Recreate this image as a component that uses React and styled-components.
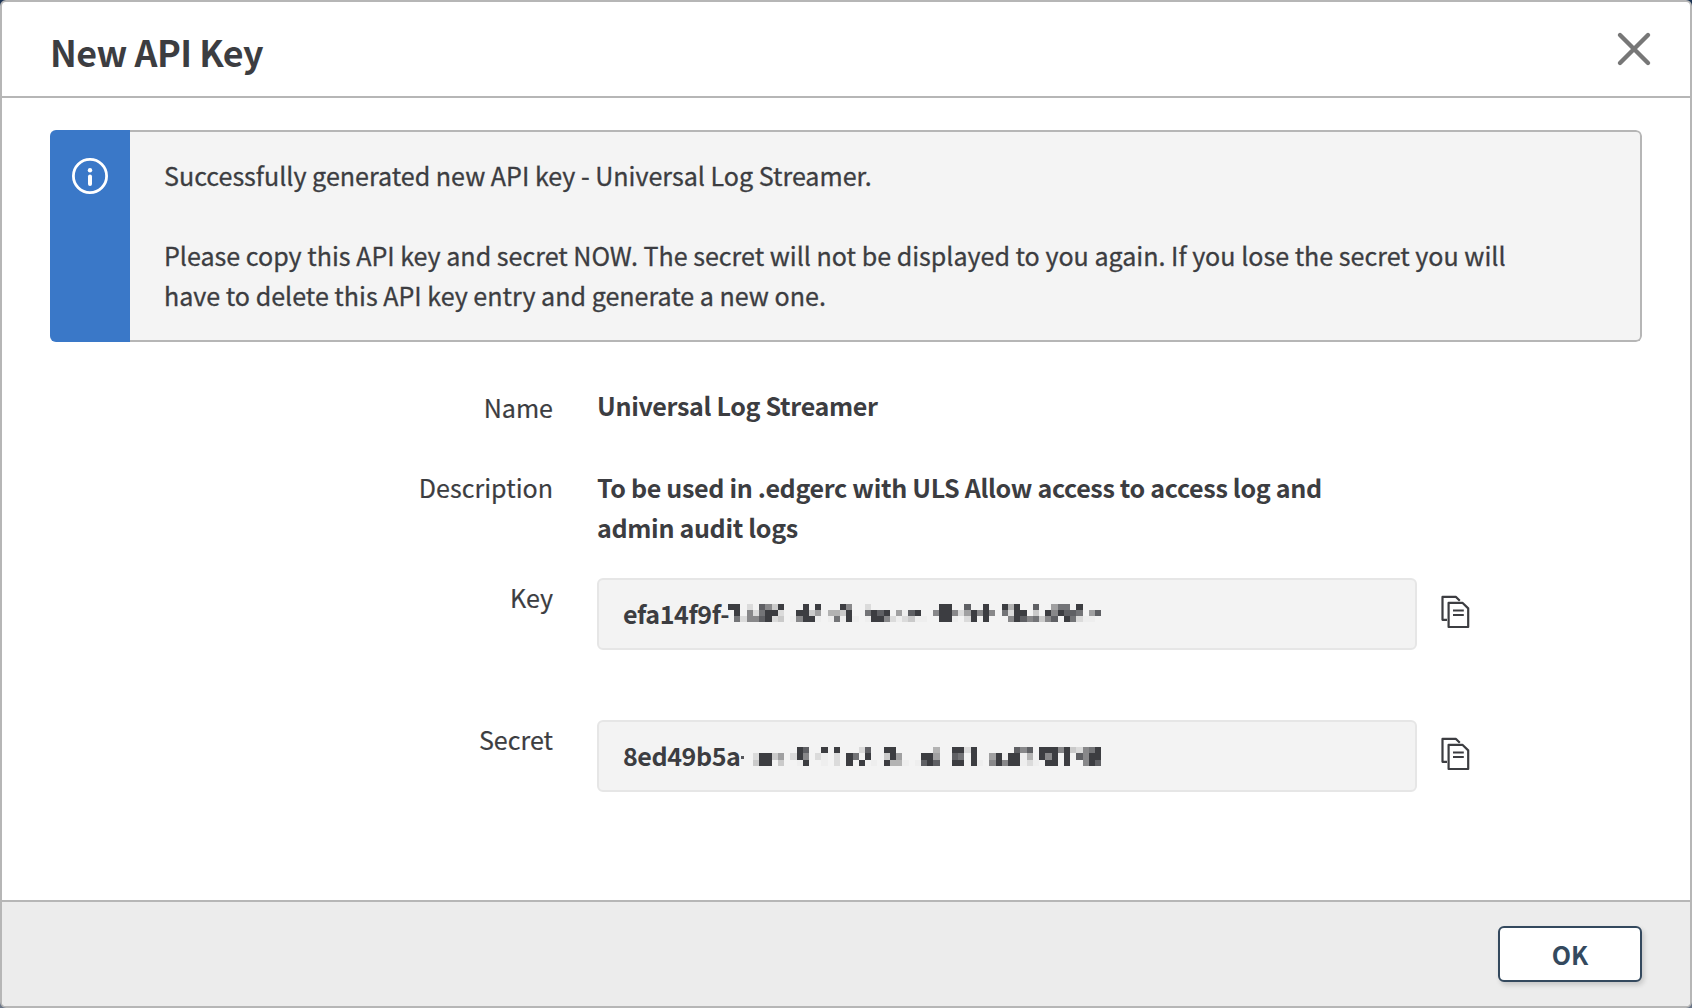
import React from "react";
import styled, { createGlobalStyle } from "styled-components";

const INK = "#3c3d41";
const LINE = "#b6b6b6";

const GlobalStyle = createGlobalStyle`
  * { box-sizing: border-box; }
  html, body { margin: 0; padding: 0; }
  body {
    background: linear-gradient(#1c3454 50%, #6a7587 50%);
    font-family: "Noto Sans CJK SC", "Noto Sans CJK JP", "Noto Sans", sans-serif;
    font-size: 25.07px;
    line-height: 40px;
    color: ${INK};
    overflow: hidden;
  }
`;

const Dialog = styled.section`
  display: flex;
  flex-direction: column;
  width: 1692px;
  height: 1008px;
  border: 2px solid ${LINE};
  border-radius: 6px;
  background: #fff;
  overflow: hidden;
`;

const Header = styled.header`
  display: flex;
  justify-content: space-between;
  align-items: flex-start;
  height: 96px;
  padding: 25px 38px 0 48px;
  border-bottom: 2px solid ${LINE};
`;

const Title = styled.h1`
  margin: 0;
  font-size: 35.8px;
  line-height: 48px;
  font-weight: 700;
  letter-spacing: -0.5px;
`;

const IconButton = styled.button`
  display: flex;
  padding: 0;
  border: 0;
  background: none;
  margin-top: ${(p) => p.$top || "0"};
`;

const Body = styled.main`
  flex: 1;
  padding: 32px 48px 0;
`;

const Alert = styled.div`
  display: flex;
  height: 212px;
  border-radius: 6px;
  overflow: hidden;
`;

const AlertMark = styled.div`
  display: flex;
  justify-content: center;
  width: 80px;
  padding-top: 28px;
  background: #3a78c8;
`;

const AlertText = styled.div`
  flex: 1;
  padding: 23px 0 0 34px;
  border: 2px solid ${LINE};
  border-left: 0;
  border-radius: 0 6px 6px 0;
  background: #f4f4f4;
  -webkit-text-stroke: 0.3px ${INK};
`;

const Line = styled.p`
  margin: 0 0 ${(p) => p.$gap || "0"};
  white-space: nowrap;
`;

const Form = styled.div`
  display: grid;
  grid-template-columns: 503px 820px auto;
  grid-template-rows: 82px 111px 142px 72px;
  padding-top: 43px;
`;

const Label = styled.div`
  margin-top: ${(p) => p.$shift || "0"};
  text-align: right;
  -webkit-text-stroke: 0.2px ${INK};
`;

const Value = styled.div`
  padding-left: 44px;
  font-weight: 700;
  letter-spacing: -0.33px;
  grid-column: 2 / 4;
  white-space: nowrap;
`;

const FieldCell = styled.div`
  display: flex;
  align-items: flex-start;
  gap: 24px;
  grid-column: 2 / 4;
  padding-left: 44px;
`;

const Field = styled.div`
  display: flex;
  width: 820px;
  height: 72px;
  padding: 13px 24px 0;
  border: 2px solid #e6e6e6;
  border-radius: 6px;
  background: #f3f3f3;
  font-weight: 700;
`;

const Prefix = styled.span`
  width: ${(p) => p.$width}px;
  white-space: nowrap;
  letter-spacing: -0.42px;
`;

const Footer = styled.footer`
  display: flex;
  justify-content: flex-end;
  height: 106px;
  padding: 24px 48px 0;
  border-top: 2px solid ${LINE};
  background: #ececec;
`;

const OkButton = styled.button`
  width: 144px;
  height: 56px;
  padding: 0 0 1px;
  border: 2px solid #34495e;
  border-radius: 6px;
  background: #fff;
  box-shadow: 2px 3px 5px rgba(0, 0, 0, 0.16);
  font: inherit;
  font-weight: 700;
  color: #34495e;
`;

const SHADES = ["", "#eeeeee", "#dbdbdb", "#cacaca", "#b3b3b3", "#a0a0a1", "#88888a", "#737477", "#5f6064", INK];

const KEY_CELLS =
  "900 997 002 266 026 878 699 392 923 000 001 096 999 039 951 000 041 047 931 699 001 000 271 099 089 096 002 051 012 083 091 001 000 060 999 999 061 020 852 099 060 999 060 000 970 426 999 098 006 837 003 096 568 790 789 087 972 001 051 080";

const SECRET_CELLS =
  "023 099 099 030 053 000 020 991 869 000 020 911 000 922 000 099 070 209 890 001 000 939 994 054 001 000 001 098 099 458 000 000 989 979 200 999 001 000 056 099 016 099 899 611 842 001 990 969 999 600 999 300 280 666 799 998";

const Mosaic = styled.svg`
  display: block;
  flex: none;
  margin-top: ${(p) => p.$top}px;
`;

function Redacted({ cells, top, rowHeight, lead = 0 }) {
  const step = 6.22;
  const columns = cells.split(" ");
  return (
    <Mosaic $top={top} width={lead + Math.ceil(columns.length * step)} height={20} shapeRendering="crispEdges" aria-hidden="true">
      {lead > 0 && <rect x="1" y="9" width="3" height="3" fill="#55565a" />}
      {columns.map((column, c) =>
        [...column].map((level, r) => {
          if (level === "0") return null;
          const x = Math.round(c * step);
          const y = Math.round(r * rowHeight);
          return (
            <rect
              key={`${c}-${r}`}
              x={lead + x}
              y={y}
              width={Math.round((c + 1) * step) - x}
              height={Math.round((r + 1) * rowHeight) - y}
              fill={SHADES[level]}
            />
          );
        })
      )}
    </Mosaic>
  );
}

const CloseIcon = () => (
  <svg width="36" height="36" viewBox="0 0 36 36" stroke="#777" strokeWidth="4.4" strokeLinecap="round">
    <path d="M4 4l28 28M32 4L4 32" />
  </svg>
);

const InfoIcon = () => (
  <svg width="36" height="36" viewBox="0 0 36 36" fill="none">
    <circle cx="18" cy="18" r="16.6" stroke="#fff" strokeWidth="2.8" />
    <circle cx="18" cy="12.2" r="2.2" fill="#fff" />
    <path d="M18 18.4v7.6" stroke="#fff" strokeWidth="4" strokeLinecap="round" />
  </svg>
);

const CopyIcon = () => (
  <svg width="30" height="34" viewBox="0 0 30 34" fill="none" stroke={INK} strokeWidth="2.2" strokeLinejoin="round">
    <path d="M6 24.8H1.5V1.9H15L18.8 5.8" />
    <path d="M7.6 7.8H21.4L27.2 13.4V32H7.6Z" />
    <path d="M12 15.4H22.8M12 20H22.8" strokeWidth="2" />
  </svg>
);

export default function App() {
  return (
    <>
      <GlobalStyle />
      <Dialog>
        <Header>
          <Title>New API Key</Title>
          <IconButton $top="4px" aria-label="Close">
            <CloseIcon />
          </IconButton>
        </Header>
        <Body>
          <Alert>
            <AlertMark>
              <InfoIcon />
            </AlertMark>
            <AlertText>
              <Line $gap="40px">Successfully generated new API key - Universal Log Streamer.</Line>
              <Line>Please copy this API key and secret NOW. The secret will not be displayed to you again. If you lose the secret you will</Line>
              <Line>have to delete this API key entry and generate a new one.</Line>
            </AlertText>
          </Alert>
          <Form>
            <Label $shift="2px">Name</Label>
            <Value>Universal Log Streamer</Value>
            <Label>Description</Label>
            <Value>
              <Line>To be used in .edgerc with ULS Allow access to access log and</Line>
              <Line>admin audit logs</Line>
            </Value>
            <Label $shift="-1px">Key</Label>
            <FieldCell>
              <Field>
                <Prefix $width={105}>efa14f9f-</Prefix>
                <Redacted cells={KEY_CELLS} top={11} rowHeight={6} />
              </Field>
              <IconButton $top="17px" aria-label="Copy key">
                <CopyIcon />
              </IconButton>
            </FieldCell>
            <Label $shift="-1px">Secret</Label>
            <FieldCell>
              <Field>
                <Prefix $width={117}>8ed49b5a</Prefix>
                <Redacted cells={SECRET_CELLS} top={12} rowHeight={6.25} lead={13} />
              </Field>
              <IconButton $top="17px" aria-label="Copy secret">
                <CopyIcon />
              </IconButton>
            </FieldCell>
          </Form>
        </Body>
        <Footer>
          <OkButton>OK</OkButton>
        </Footer>
      </Dialog>
    </>
  );
}
